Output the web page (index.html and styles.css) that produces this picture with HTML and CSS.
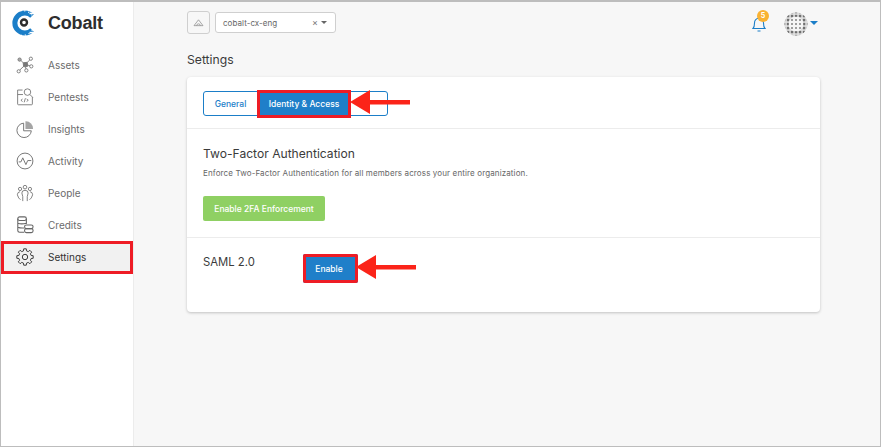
FILE: index.html
```html
<!DOCTYPE html>
<html lang="en">
<head>
<meta charset="utf-8">
<title>Cobalt Settings</title>
<link rel="stylesheet" href="styles.css">
</head>
<body>
<div class="app">
  <aside class="sidebar">
    <div class="brand">
      <svg class="logo" viewBox="0 0 24 26" width="24" height="26"><path d="M21 6A10 10 0 1 0 21 20" fill="none" stroke="#1b7ec8" stroke-width="5"/><circle cx="11.500" cy="13" r="12.400" fill="none" stroke="#fff" stroke-width="1.300" stroke-dasharray="1 3"/><path d="M18.500 3.500L24 3M18.500 22.500L24 23" stroke="#fff" stroke-width="1.600"/><circle cx="13" cy="12.500" r="3" fill="none" stroke="#2d2d2d" stroke-width="2.400"/></svg>
      <span class="brand-name">Cobalt</span>
    </div>
    <nav class="nav">
      <a class="nav-item"><svg class="nav-icon" viewBox="0 0 20 20"><g fill="none" stroke="#777" stroke-width="1"><circle cx="4" cy="4" r="1.800" fill="#aaa"/><circle cx="16.500" cy="3" r="1.800"/><circle cx="3" cy="17" r="1.800"/><circle cx="17" cy="11.500" r="1.800"/><circle cx="11.500" cy="16" r="1.800"/><path d="M8 7.500l4.500-.5 .5 4.500-4.500 .5z" fill="#777"/><path d="M5.500 5l3 3M15.300 4.500L12.500 7M4.300 15.500L8.500 11.500M13 10l2.500 1M10.500 12l.7 2.500"/></g></svg><span>Assets</span></a>
      <a class="nav-item"><svg class="nav-icon" viewBox="0 0 22 22"><g fill="none" stroke="#777" stroke-width="1.100"><path d="M8 2.500H2v17q0 1 1 1h16q1 0 1-1V11"/><circle cx="14" cy="5" r="4"/><path d="M17 8l3.500 3.500M2 8h6.500M8 13.500l-2 1.500L8 16.500M13 13.500l2 1.500-2 1.500M11.500 12.500l-1.500 5"/></g></svg><span>Pentests</span></a>
      <a class="nav-item"><svg class="nav-icon" viewBox="0 0 20 20"><path d="M8.500 3.500A8 8 0 1 0 17 12H8.500z" fill="none" stroke="#777" stroke-width="1.100"/><path d="M10.500 1.500A8 8 0 0 1 19 10h-8.500z" fill="#a5a5a5"/></svg><span>Insights</span></a>
      <a class="nav-item"><svg class="nav-icon" viewBox="0 0 20 20"><g fill="none" stroke="#777" stroke-width="1.100"><circle cx="10" cy="10" r="8.800"/><path d="M3 11h2.500l2-4.500 3.500 7.500 2-4.500H17"/></g></svg><span>Activity</span></a>
      <a class="nav-item"><svg class="nav-icon" viewBox="0 0 20 20"><g fill="none" stroke="#777" stroke-width="1"><circle cx="10" cy="3.500" r="2"/><circle cx="4.500" cy="5.500" r="1.800"/><circle cx="15.500" cy="5.500" r="1.800"/><path d="M7.500 19v-5L6.500 10q0-3 3.500-3t3.500 3L12.500 14v5M5 17.500L3 15.500 1.500 12q0-3 3-3.500M15 17.500l2-2L18.500 12q0-3-3-3.500"/></g></svg><span>People</span></a>
      <a class="nav-item"><svg class="nav-icon" viewBox="0 0 20 20"><g fill="none" stroke="#666" stroke-width="1.200"><rect x="2" y="1" width="9.500" height="4" rx="2"/><path d="M2 3v13.500q0 1.500 2 1.500h5M11.500 3v6M2 8q4 1.500 9.500 0M2 12.500q3 1.200 7 .8"/><rect x="9.500" y="10" width="9.500" height="4" rx="2"/><rect x="9.500" y="14" width="9.500" height="4.500" rx="2"/></g></svg><span>Credits</span></a>
      <a class="nav-item active"><svg class="nav-icon" viewBox="0 0 20 20"><g fill="none" stroke="#3c3c3c" stroke-width="1.100" stroke-linejoin="round"><circle cx="10" cy="10" r="3"/><path d="M16.790 8.310L19.090 8.560 19.090 11.440 16.790 11.690 16 13.610 17.440 15.410 15.410 17.440 13.610 16 11.690 16.790 11.440 19.090 8.560 19.090 8.310 16.790 6.390 16 4.590 17.440 2.560 15.410 4 13.610 3.210 11.690 .91 11.440 .91 8.560 3.210 8.310 4 6.390 2.560 4.590 4.590 2.560 6.390 4 8.310 3.210 8.560 .91 11.440 .91 11.690 3.210 13.610 4 15.410 2.560 17.440 4.590 16 6.390Z"/></g></svg><span>Settings</span></a>
    </nav>
  </aside>
  <main class="main">
    <header class="topbar">
      <div class="org">
        <span class="org-icon"><svg viewBox="0 0 12 10" width="11" height="9"><path d="M1 8.500h10L6 2zM4 8.500q0-2 2-2t2 2" fill="none" stroke="#888" stroke-width=".8"/></svg></span>
        <div class="org-select"><span class="org-name">cobalt-cx-eng</span><span class="org-x">×</span><span class="caret"></span></div>
      </div>
      <div class="user">
        <span class="bell"><svg viewBox="0 0 14 16" width="14" height="16"><path d="M1 12.500q1.500-1.500 1.500-5.500t4.500-5q4.500 1 4.500 5t1.500 5.500zM5.500 15h3" fill="none" stroke="#1b7ec8" stroke-width="1.100"/></svg><span class="badge">5</span></span>
        <div class="account">
          <svg class="avatar" viewBox="0 0 24 24" width="24" height="24"><defs><pattern id="dots" width="4" height="4" patternUnits="userSpaceOnUse" x="2" y="2"><rect width="4" height="4" fill="#e4e4e4"/><rect x=".8" y=".8" width="2.500" height="2.500" fill="#6f6f6f"/></pattern><pattern id="inner" width="4" height="4" patternUnits="userSpaceOnUse" x="2" y="2"><rect width="4" height="4" fill="#f6f6f6"/><rect x="1.100" y="1.100" width="1.800" height="1.800" fill="#8a8a8a"/></pattern><filter id="soft"><feGaussianBlur stdDeviation=".35"/></filter></defs><g filter="url(#soft)"><circle cx="12" cy="12" r="11.500" fill="url(#dots)"/><circle cx="12" cy="12" r="7.500" fill="url(#inner)"/></g></svg>
          <span class="caret caret-blue"></span>
        </div>
      </div>
    </header>
    <h1 class="page-title">Settings</h1>
    <section class="card">
      <div class="tabs-row">
        <div class="tabs">
          <a class="tab">General</a>
          <a class="tab tab-active">Identity &amp; Access</a>
          <svg class="arrow arrow-tab" viewBox="0 0 60 24" width="60" height="24"><path d="M0 12L20 0V10H60V14.500H20V24Z" fill="#fb2419"/></svg>
        </div>
      </div>
      <div class="section two-factor">
        <h2 class="section-title">Two-Factor Authentication</h2>
        <p class="section-text">Enforce Two-Factor Authentication for all members across your entire organization.</p>
        <button class="btn btn-green">Enable 2FA Enforcement</button>
      </div>
      <div class="section saml">
        <h2 class="section-title">SAML 2.0</h2>
        <div class="saml-action">
          <button class="btn btn-blue">Enable</button>
          <svg class="arrow arrow-saml" viewBox="0 0 60 24" width="60" height="24"><path d="M0 12L20 0V10H60V14.500H20V24Z" fill="#fb2419"/></svg>
        </div>
      </div>
    </section>
  </main>
</div>
</body>
</html>
```

FILE: styles.css
```css
* { box-sizing: border-box; }
html, body { margin: 0; height: 100%; }
body {
  font-family: "Inter", "Liberation Sans", sans-serif;
  color: #333;
  background: #f7f7f7;
  overflow: hidden;
}
.app {
  display: flex;
  height: 447px;
  border: 1px solid #bdbdbd;
  border-top-width: 2px;
}
.sidebar {
  width: 133px;
  flex: none;
  background: #fff;
  border-right: 1px solid #ececec;
}
.brand {
  display: flex;
  align-items: center;
  gap: 13px;
  height: 43px;
  padding: 0 0 1px 10px;
}
.logo { flex: none; }
.brand-name {
  font-family: "Liberation Sans", sans-serif;
  font-size: 18px;
  font-weight: 700;
  color: #2e2e2e;
  letter-spacing: -.2px;
}
.nav { display: flex; flex-direction: column; padding-top: 4px; }
.nav-item {
  display: flex;
  align-items: center;
  gap: 14px;
  height: 32px;
  padding-left: 15px;
  font-size: 10px;
  color: #6b6b6b;
}
.nav-icon { width: 18px; height: 18px; flex: none; }
.active {
  height: 33px;
  padding-bottom: 1px;
  background: #f1f1f1;
  color: #333;
  outline: 3px solid #ee1c25;
  outline-offset: -3px;
}
.main { flex: 1; min-width: 0; padding: 0 60px 0 53px; }
.topbar {
  display: flex;
  justify-content: space-between;
  align-items: center;
  height: 41px;
}
.org { display: flex; align-items: center; gap: 5px; }
.org-icon {
  display: flex;
  align-items: center;
  justify-content: center;
  width: 23px;
  height: 23px;
  border: 1px solid #cfcfcf;
  border-radius: 3px;
  background: #f7f7f7;
}
.org-select {
  display: flex;
  align-items: center;
  width: 121px;
  height: 21px;
  padding: 0 8px 0 7px;
  border: 1px solid #cfcfcf;
  border-radius: 3px;
  background: #fff;
  font-size: 8px;
  letter-spacing: .05px;
  color: #666;
}
.org-name { flex: 1; }
.org-x { margin-right: 3px; font-size: 9px; color: #777; }
.caret {
  width: 0;
  height: 0;
  border-left: 3.500px solid transparent;
  border-right: 3.500px solid transparent;
  border-top: 3.500px solid #666;
}
.user { display: flex; align-items: center; gap: 18px; margin-right: 2px; padding-top: 3px; }
.account { display: flex; align-items: center; gap: 2px; }
.caret-blue {
  border-left-width: 4px;
  border-right-width: 4px;
  border-top: 4px solid #1b7ec8;
  margin-bottom: 3px;
}
.bell { position: relative; display: flex; }
.badge {
  position: absolute;
  top: -6px;
  right: -3px;
  width: 12px;
  height: 12px;
  border-radius: 50%;
  background: #f9b233;
  color: #fff;
  font-size: 7px;
  font-weight: 700;
  line-height: 12px;
  text-align: center;
}
.page-title {
  margin: 8px 0 9px;
  font-size: 12.200px;
  font-weight: 400;
  line-height: 17px;
  color: #3b3b3b;
}
.card {
  background: #fff;
  border-radius: 4px;
  box-shadow: 0 1px 3px rgba(0,0,0,.22);
  height: 235px;
}
.tabs-row { padding: 14px 16px 0; height: 52px; border-bottom: 1px solid #ececec; }
.tabs {
  position: relative;
  display: flex;
  width: 185px;
  height: 25px;
  border: 1px solid #1b7ec8;
  border-radius: 3px;
}
.tab {
  display: flex;
  align-items: center;
  justify-content: center;
  font-size: 8.500px;
  font-weight: 500;
  color: #1b7ec8;
}
.tab:first-child { width: 53px; }
.tab-active {
  width: 94px;
  height: 28px;
  margin: -2px 0 0;
  background: #1f7fc9;
  color: #fff;
  outline: 3px solid #ee1c25;
  outline-offset: -3px;
}
.arrow { position: absolute; }
.arrow-tab { left: 146px; top: -2px; }
.section { padding: 0 16px; }
.two-factor { height: 109px; padding-top: 17px; border-bottom: 1px solid #ececec; }
.section-title { margin: 0; font-size: 12.100px; font-weight: 400; line-height: 16px; color: #3b3b3b; }
.section-text { margin: 5px 0 0; font-size: 8px; letter-spacing: .125px; line-height: 12px; color: #666; }
.btn {
  display: block;
  border: 0;
  border-radius: 2px;
  font-family: inherit;
  font-size: 8.500px;
  font-weight: 500;
  color: #fff;
}
.btn-green { margin-top: 17px; width: 122px; height: 25px; background: #8fd063; }
.saml { display: flex; padding-top: 16px; }
.saml .section-title { width: 100px; font-size: 11.300px; }
.saml-action { position: relative; }
.btn-blue {
  width: 55px;
  height: 29px;
  padding: 0 3px 0 0;
  background: #1f7fc9;
  outline: 3px solid #ee1c25;
  outline-offset: -3px;
}
.arrow-saml { left: 53px; top: 1px; }
```
